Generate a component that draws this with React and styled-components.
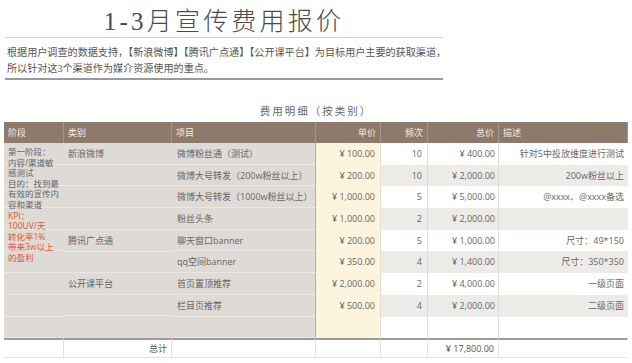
import React from 'react';
import styled, { createGlobalStyle } from 'styled-components';

const GlobalStyle = createGlobalStyle`
  body {
    margin: 0;
    background: #fff;
    font-family: 'Open Sans', 'Noto Sans CJK SC', sans-serif;
    color: #666;
  }
`;

const Page = styled.div`
  width: 632px;
  height: 363px;
  overflow: hidden;
`;

const Intro = styled.header`
  width: 438px;
  margin-left: 5px;
`;

const Title = styled.h1`
  margin: 0;
  padding-top: 6px;
  height: 31px;
  line-height: 31px;
  text-align: center;
  font-family: 'Liberation Serif', 'Noto Sans CJK SC', serif;
  font-weight: 300;
  font-size: 25px;
  letter-spacing: 3.2px;
  color: #4a4a4a;
  border-bottom: 1px solid #d2d2d2;
`;

const IntroText = styled.p`
  margin: 0;
  padding: 7px 0 1px 2px;
  font-family: 'Liberation Serif', 'Noto Sans CJK SC', serif;
  font-size: 10.1px;
  line-height: 16px;
  color: #555;
  white-space: nowrap;
  border-bottom: 2px solid #9a9a9a;
`;

const Caption = styled.div`
  width: 624px;
  margin-left: 4px;
  padding: 24px 0 4px;
  line-height: 14px;
  text-align: center;
  font-size: 10.5px;
  letter-spacing: 2px;
  color: #666;
`;

const Grid = styled.div`
  margin-left: 4px;
  width: 624px;
  display: grid;
  grid-template-columns: 60px 108px 144px 65px 47px 71px 129px;
  grid-template-rows: 21px repeat(9, 21.7px) 20px;
  font-size: 9px;
`;

const Head = styled.div`
  background: #8d7a6a;
  color: #f4ece3;
  display: flex;
  align-items: center;
  justify-content: ${(p) => (p.$right ? 'flex-end' : 'flex-start')};
  padding: 0 4px;
  border-right: 1px solid #a69484;
  &:last-of-type {
    border-right: none;
  }
`;

const rowLines =
  'repeating-linear-gradient(to bottom, transparent 0, transparent 20.7px, #e9e6e3 20.7px, #e9e6e3 21.7px)';

const Side = styled.div`
  grid-column: ${(p) => p.$col};
  grid-row: ${(p) => p.$row};
  background: #dedad6 ${rowLines};
  padding: 5px 4px 0;
  line-height: 12px;
  color: #666;
`;

const Stage = styled(Side)`
  padding: 4px 2px 0 4px;
  font-size: 8.5px;
  line-height: 10.6px;
  white-space: nowrap;
`;

const Red = styled.span`
  color: #e2542e;
`;

const Cell = styled.div`
  display: flex;
  align-items: center;
  justify-content: ${(p) => (p.$right ? 'flex-end' : 'flex-start')};
  padding: 0 ${(p) => p.$pad || 4}px;
  white-space: nowrap;
  background: ${(p) => p.$bg};
  border-right: 1px solid ${(p) => p.$line || '#dedbd8'};
  border-bottom: 1px solid ${(p) => p.$hline || 'transparent'};
  color: #666;
`;

const Total = styled.div`
  display: flex;
  align-items: center;
  justify-content: ${(p) => (p.$right ? 'flex-end' : 'flex-start')};
  padding: 0 4px;
  background: #fff;
  border-top: 2px solid #9b9b9b;
  border-bottom: 1px solid #e2e2e2;
  border-right: 1px solid ${(p) => (p.$noLine ? 'transparent' : '#e2e2e2')};
  color: #555;
`;

const rows = [
  ['微博粉丝通（测试）', '¥ 100.00', '10', '¥ 400.00', '针对5中投放维度进行测试'],
  ['微博大号转发（200w粉丝以上）', '¥ 200.00', '10', '¥ 2,000.00', '200w粉丝以上'],
  ['微博大号转发（1000w粉丝以上）', '¥ 1,000.00', '5', '¥ 5,000.00', '@xxxx、@xxxx备选'],
  ['粉丝头条', '¥ 1,000.00', '2', '¥ 2,000.00', ''],
  ['聊天窗口banner', '¥ 200.00', '5', '¥ 1,000.00', '尺寸：49*150'],
  ['qq空间banner', '¥ 350.00', '4', '¥ 1,400.00', '尺寸：350*350'],
  ['首页置顶推荐', '¥ 2,000.00', '2', '¥ 4,000.00', '一级页面'],
  ['栏目页推荐', '¥ 500.00', '4', '¥ 2,000.00', '二级页面'],
  ['', '', '', '', ''],
];

const App = () => {
  return (
    <Page>
      <GlobalStyle />
      <Intro>
        <Title>1-3月宣传费用报价</Title>
        <IntroText>
          根据用户调查的数据支持，【新浪微博】【腾讯广点通】【公开课平台】为目标用户主要的获取渠道，
          <br />
          所以针对这3个渠道作为媒介资源使用的重点。
        </IntroText>
      </Intro>
      <Caption>费用明细（按类别）</Caption>
      <Grid>
        <Head>阶段</Head>
        <Head>类别</Head>
        <Head>项目</Head>
        <Head $right>单价</Head>
        <Head $right>频次</Head>
        <Head $right>总价</Head>
        <Head>描述</Head>

        <Stage $col="1" $row="2 / span 9">
          第一阶段：
          <br />
          内容/渠道敏
          <br />
          感测试
          <br />
          目的：找到最
          <br />
          有效的宣传内
          <br />
          容和渠道
          <br />
          <Red>
            KPI：
            <br />
            100UV/天
            <br />
            转化率1%
            <br />
            带来3w以上
            <br />
            的盈利
          </Red>
        </Stage>
        <Side $col="2" $row="2 / span 4">新浪微博</Side>
        <Side $col="2" $row="6 / span 2">腾讯广点通</Side>
        <Side $col="2" $row="8 / span 2">公开课平台</Side>
        <Side $col="2" $row="10" />

        {rows.map((r, i) => {
          const stripe = i % 2 === 0 ? '#ffffff' : '#edebe8';
          return (
            <React.Fragment key={i}>
              <Cell
                style={{ gridColumn: 3, gridRow: i + 2 }}
                $bg="#dedad6"
                $line="#b3aaa2"
                $hline="#e9e6e3"
                $pad={5}
              >
                {r[0]}
              </Cell>
              <Cell style={{ gridColumn: 4, gridRow: i + 2 }} $bg="#fdf4de" $line="#e7dcc6" $right $pad={5}>
                {r[1]}
              </Cell>
              <Cell style={{ gridColumn: 5, gridRow: i + 2 }} $bg={stripe} $right $pad={5}>
                {r[2]}
              </Cell>
              <Cell style={{ gridColumn: 6, gridRow: i + 2 }} $bg={stripe} $right $pad={3}>
                {r[3]}
              </Cell>
              <Cell style={{ gridColumn: 7, gridRow: i + 2 }} $bg={stripe} $line="transparent" $right $pad={3}>
                {r[4]}
              </Cell>
            </React.Fragment>
          );
        })}

        <Total />
        <Total $right>总计</Total>
        <Total />
        <Total />
        <Total />
        <Total $right>¥ 17,800.00</Total>
        <Total $noLine />
      </Grid>
    </Page>
  );
};

export default App;
